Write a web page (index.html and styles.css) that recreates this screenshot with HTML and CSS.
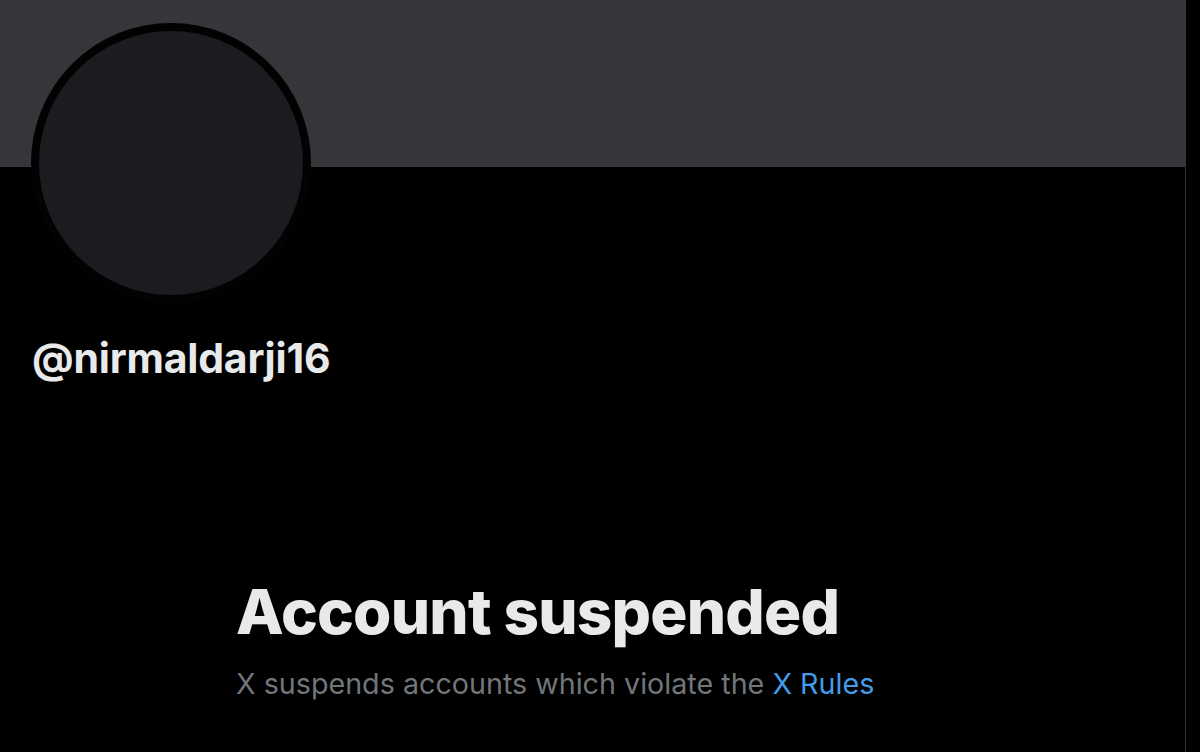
FILE: index.html
```html
<!DOCTYPE html>
<html>
<head>
<meta charset="utf-8">
<link rel="stylesheet" href="styles.css">
</head>
<body>
<div class="page">
  <div class="banner"></div>
  <div class="content">
    <div class="avatar"></div>
    <div class="handle">@nirmaldarji16</div>
    <div class="notice">
      <h1 class="title">Account suspended</h1>
      <p class="desc">X suspends accounts which violate the <a class="link" href="#">X Rules</a></p>
    </div>
  </div>
</div>
</body>
</html>
```
FILE: styles.css
```css
html, body {
  margin: 0;
  padding: 0;
  background: #000;
  height: 100%;
  overflow: hidden;
}
body {
  font-family: Inter, "Noto Sans", "Liberation Sans", sans-serif;
  color: #e7e9ea;
}
.page {
  width: 1186px;
  height: 752px;
  display: flex;
  flex-direction: column;
}
.banner {
  height: 167px;
  background: #35363a;
  flex: none;
}
.content {
  flex: 1;
  border-right: 1px solid #2f3336;
  padding-left: 31px;
}
.avatar {
  width: 264px;
  height: 264px;
  border: 8px solid #020202;
  border-radius: 50%;
  background: #1b1c20;
  margin-top: -144px;
}
.handle {
  margin-top: 31px;
  margin-left: 1px;
  font-size: 41px;
  font-weight: 700;
  line-height: 48px;
  letter-spacing: -0.2px;
}
.notice {
  margin-left: 205px;
  margin-top: 194px;
}
.title {
  margin: 0;
  font-size: 62px;
  font-weight: 800;
  line-height: 72px;
  letter-spacing: -0.8px;
}
.desc {
  margin: 0;
  margin-top: 18px;
  font-size: 28.7px;
  line-height: 36px;
  color: #71767b;
}
.link {
  color: #439ce9;
  text-decoration: none;
}
```
